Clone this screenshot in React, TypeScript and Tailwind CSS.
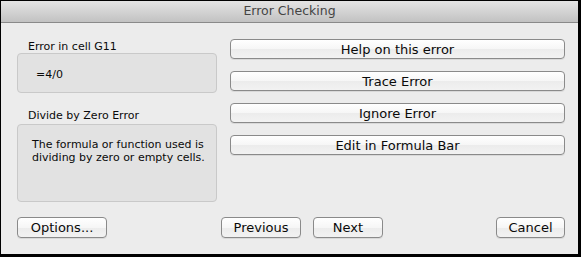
const btn =
  "flex items-center justify-center border border-[#8a8a8a] rounded-[4px] bg-[linear-gradient(#ffffff,#f6f6f6_50%,#ececec_52%,#f2f2f2)] shadow-[0_1px_0_rgba(0,0,0,0.08)] text-[13px] leading-none text-[#0a0a0a]";

export default function App() {
  return (
    <div className="w-[581px] h-[257px] flex flex-col bg-[#ececec] border-black border-t border-l border-r-[3px] border-b-[3px] font-['DejaVu_Sans',sans-serif]">
      {/* title bar */}
      <div className="h-[22px] shrink-0 flex items-center justify-center border-b border-[#8a8a8a] bg-[linear-gradient(#e4e4e4,#c2c2c2)] text-[12.5px] text-[#444444]">
        Error Checking
      </div>

      <div className="flex-1 flex flex-col pl-4 pr-[13px] pb-4">
        <div className="flex items-start gap-[13px]">
          {/* left column */}
          <div className="w-[200px] shrink-0 pt-[17px] text-[11px] text-[#0a0a0a]">
            <div className="h-[13px] leading-[13px] pl-[11px]">Error in cell G11</div>
            <div className="h-[40px] bg-[#e2e2e2] border border-[#c9c9c9] rounded-[4px] pl-[18px] pt-[14px] leading-[13px]">
              =4/0
            </div>
            <div className="h-[13px] leading-[13px] pl-[11px] mt-4 mb-[2px]">Divide by Zero Error</div>
            <div className="h-[78px] bg-[#e2e2e2] border border-[#c9c9c9] rounded-[4px] pl-[14px] pt-[13px] leading-[13px]">
              The formula or function used is
              <br />
              dividing by zero or empty cells.
            </div>
          </div>

          {/* right column */}
          <div className="flex-1 flex flex-col gap-3 pt-4">
            <button className={`${btn} h-[20px]`}>Help on this error</button>
            <button className={`${btn} h-[20px]`}>Trace Error</button>
            <button className={`${btn} h-[20px]`}>Ignore Error</button>
            <button className={`${btn} h-[20px]`}>Edit in Formula Bar</button>
          </div>
        </div>

        {/* bottom row */}
        <div className="mt-auto flex items-center">
          <button className={`${btn} h-[21px] w-[90px]`}>Options...</button>
          <button className={`${btn} h-[21px] w-[80px] ml-[114px]`}>Previous</button>
          <button className={`${btn} h-[21px] w-[70px] ml-3`}>Next</button>
          <button className={`${btn} h-[21px] w-[69px] ml-auto`}>Cancel</button>
        </div>
      </div>
    </div>
  );
}
